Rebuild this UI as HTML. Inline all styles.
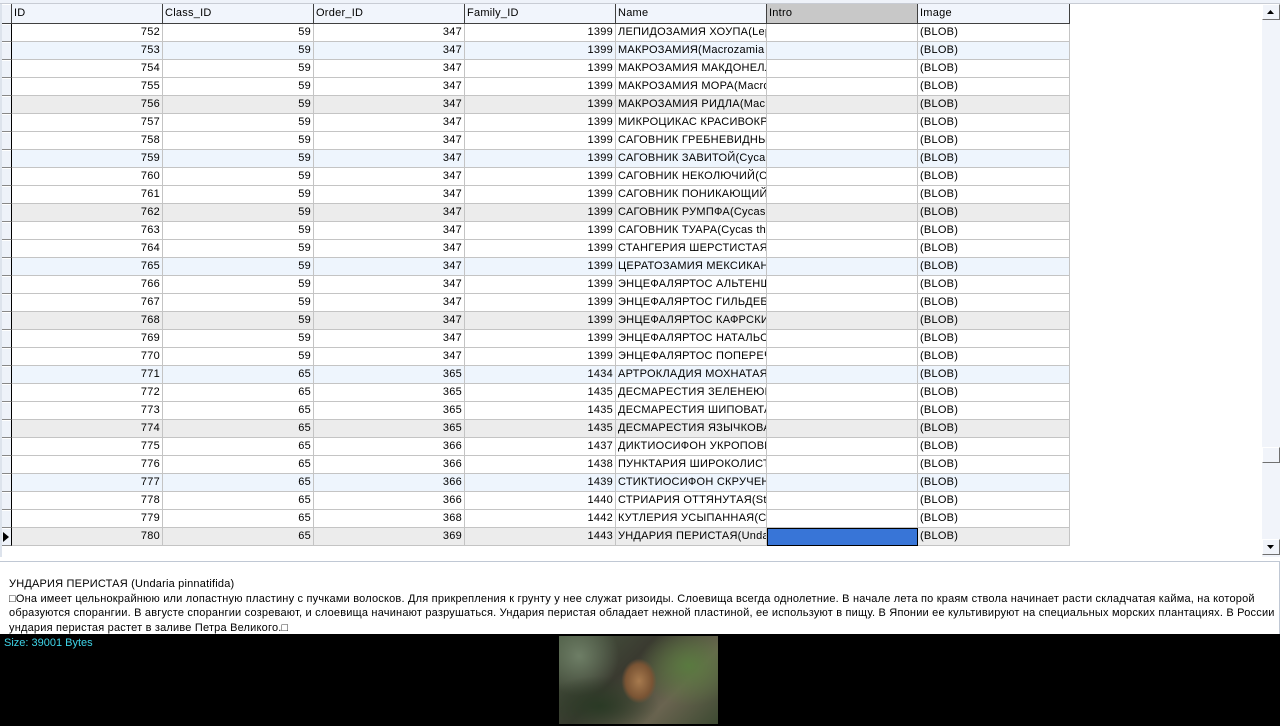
<!DOCTYPE html>
<html><head><meta charset="utf-8">
<style>
*{margin:0;padding:0;box-sizing:border-box}
body{width:1280px;height:726px;overflow:hidden;background:#fff;font-family:"Liberation Sans",Tahoma,sans-serif;font-size:11px;color:#000;position:relative}
.top{position:absolute;left:0;top:0;width:1280px;height:4px;background:#eef2f9;border-bottom:1px solid #c8ccd4}
.grid{position:absolute;left:0;top:4px;width:1262px;height:553px;background:#fff;overflow:hidden}
.r{position:absolute;left:0;height:18px;width:1070px}
.c{position:absolute;top:0;height:18px;border-right:1px solid #c4c4c4;border-bottom:1px solid #c4c4c4;line-height:17px;white-space:nowrap;overflow:hidden;padding:0 2px;letter-spacing:0.25px}
.n{text-align:right}
.ind{left:0;width:12px;background:#eef2f9;border-right:1px solid #000;border-bottom:1px solid #888;}
.ind:before{content:"";position:absolute;left:0;top:0;width:10px;height:16px;border-left:1px solid #fff;border-top:1px solid #fff}
.h{height:20px}
.h .c{height:20px;background:#f1f5fc;border-right:1px solid #404040;border-bottom:1px solid #404040;line-height:18px}
.b{background:#eef5fd}
.g{background:#ececec}
.sb{position:absolute;left:1262px;top:4px;width:18px;height:553px;background:#f1f4fa}
.btn{position:absolute;left:0;width:18px;height:16px;background:#f1f4fa;border:1px solid;border-color:#fff #707070 #707070 #fff}
.side{position:absolute;left:0;top:4px;width:2px;height:553px;background:#dde3ec}
.txt{position:absolute;left:0;top:561px;width:1280px;height:73px;background:#fff;border-top:1px solid #c0c8d4;border-right:1px solid #c0c8d4;padding:15px 4px 0 9px;line-height:14.5px;font-size:11px;letter-spacing:0.2px}
.blk{position:absolute;left:0;top:634px;width:1280px;height:92px;background:#000}
.sz{position:absolute;left:4px;top:3px;color:#3fd4e8;font-size:11px}
.img{position:absolute;left:559px;top:2px;width:159px;height:88px;background:
radial-gradient(ellipse 22px 28px at 80px 45px,#a77a4e,#7a5434 60%,transparent 80%),
radial-gradient(ellipse 60px 30px at 40px 70px,#2a3a25,transparent),
radial-gradient(ellipse 50px 40px at 130px 30px,#5a7a40,transparent),
radial-gradient(ellipse 40px 40px at 20px 20px,#6e7e66,transparent),
linear-gradient(135deg,#4a5a42,#3a3a30 40%,#6a6450 70%,#3d4a32)}
</style></head><body>
<div class="top"></div>
<div class="grid">
<div class="r h" style="top:0"><div class="c ind" style="background:#eef2f9"></div><div class="c" style="left:12px;width:151px">ID</div><div class="c" style="left:163px;width:151px">Class_ID</div><div class="c" style="left:314px;width:151px">Order_ID</div><div class="c" style="left:465px;width:151px">Family_ID</div><div class="c" style="left:616px;width:151px">Name</div><div class="c" style="left:767px;width:151px;background:#c8c8c8">Intro</div><div class="c" style="left:918px;width:152px">Image</div></div>
<div id="rows"></div>
</div>
<div class="side"></div>
<div class="sb"><div class="btn" style="top:0"><svg width="16" height="14"><path d="M4 9h7L7.5 5z" fill="#000"/></svg></div><div class="btn" style="top:443px;height:16px"></div><div class="btn" style="top:535px"><svg width="16" height="14"><path d="M4 5h7L7.5 9z" fill="#000"/></svg></div></div>
<div class="txt">УНДАРИЯ ПЕРИСТАЯ (Undaria pinnatifida)<br>□Она имеет цельнокрайнюю или лопастную пластину с пучками волосков. Для прикрепления к грунту у нее служат ризоиды. Слоевища всегда однолетние. В начале лета по краям ствола начинает расти складчатая кайма, на которой образуются спорангии. В августе спорангии созревают, и слоевища начинают разрушаться. Ундария перистая обладает нежной пластиной, ее используют в пищу. В Японии ее культивируют на специальных морских плантациях. В России ундария перистая растет в заливе Петра Великого.□</div>
<div class="blk"><div class="sz">Size: 39001 Bytes</div><div class="img"></div></div>
<script>
var d=[[752,59,347,1399,"ЛЕПИДОЗАМИЯ ХОУПА(Lepidozamia"],[753,59,347,1399,"МАКРОЗАМИЯ(Macrozamia communis"],[754,59,347,1399,"МАКРОЗАМИЯ МАКДОНЕЛЛА"],[755,59,347,1399,"МАКРОЗАМИЯ МОРА(Macrozamia"],[756,59,347,1399,"МАКРОЗАМИЯ РИДЛА(Macrozamia"],[757,59,347,1399,"МИКРОЦИКАС КРАСИВОКРОНЫЙ"],[758,59,347,1399,"САГОВНИК ГРЕБНЕВИДНЫЙ(Cycas"],[759,59,347,1399,"САГОВНИК ЗАВИТОЙ(Cycas circ"],[760,59,347,1399,"САГОВНИК НЕКОЛЮЧИЙ(Cycas"],[761,59,347,1399,"САГОВНИК ПОНИКАЮЩИЙ(Cycas"],[762,59,347,1399,"САГОВНИК РУМПФА(Cycas rumphii"],[763,59,347,1399,"САГОВНИК ТУАРА(Cycas thouarsii"],[764,59,347,1399,"СТАНГЕРИЯ ШЕРСТИСТАЯ(Stangeria"],[765,59,347,1399,"ЦЕРАТОЗАМИЯ МЕКСИКАНСКАЯ"],[766,59,347,1399,"ЭНЦЕФАЛЯРТОС АЛЬТЕНШТЕЙНА"],[767,59,347,1399,"ЭНЦЕФАЛЯРТОС ГИЛЬДЕБРАНДТА"],[768,59,347,1399,"ЭНЦЕФАЛЯРТОС КАФРСКИЙ(Enc"],[769,59,347,1399,"ЭНЦЕФАЛЯРТОС НАТАЛЬСКИЙ"],[770,59,347,1399,"ЭНЦЕФАЛЯРТОС ПОПЕРЕЧНОЖИЛ"],[771,65,365,1434,"АРТРОКЛАДИЯ МОХНАТАЯ(Arthro"],[772,65,365,1435,"ДЕСМАРЕСТИЯ  ЗЕЛЕНЕЮЩАЯ"],[773,65,365,1435,"ДЕСМАРЕСТИЯ ШИПОВАТАЯ(Desm"],[774,65,365,1435,"ДЕСМАРЕСТИЯ ЯЗЫЧКОВАЯ(Desm"],[775,65,366,1437,"ДИКТИОСИФОН УКРОПОВИДНЫЙ"],[776,65,366,1438,"ПУНКТАРИЯ ШИРОКОЛИСТНАЯ"],[777,65,366,1439,"СТИКТИОСИФОН СКРУЧЕННЫЙ"],[778,65,366,1440,"СТРИАРИЯ ОТТЯНУТАЯ(Striaria"],[779,65,368,1442,"КУТЛЕРИЯ УСЫПАННАЯ(Cutleria"],[780,65,369,1443,"УНДАРИЯ ПЕРИСТАЯ(Undaria pinn"]];
var h="";
d.forEach(function(r,i){var cl=(i%6==1)?"b":(i%6==4)?"g":"";var last=i==28;
h+='<div class="r '+cl+'" style="top:'+(20+i*18)+'px"><div class="c ind">'+(last?'<svg width="10" height="16" style="position:absolute;left:2px;top:1px"><path d="M1 3v10l6-5z" fill="#000"/></svg>':'')+'</div>'+
'<div class="c n" style="left:12px;width:151px">'+r[0]+'</div><div class="c n" style="left:163px;width:151px">'+r[1]+'</div><div class="c n" style="left:314px;width:151px">'+r[2]+'</div><div class="c n" style="left:465px;width:151px">'+r[3]+'</div><div class="c" style="left:616px;width:151px">'+r[4]+'</div><div class="c" style="left:767px;width:151px;'+(last?'background:#3875d7;border:1px solid #000;':'')+'"></div><div class="c" style="left:918px;width:152px">(BLOB)</div></div>';});
document.getElementById("rows").innerHTML=h;
</script>
</body></html>
